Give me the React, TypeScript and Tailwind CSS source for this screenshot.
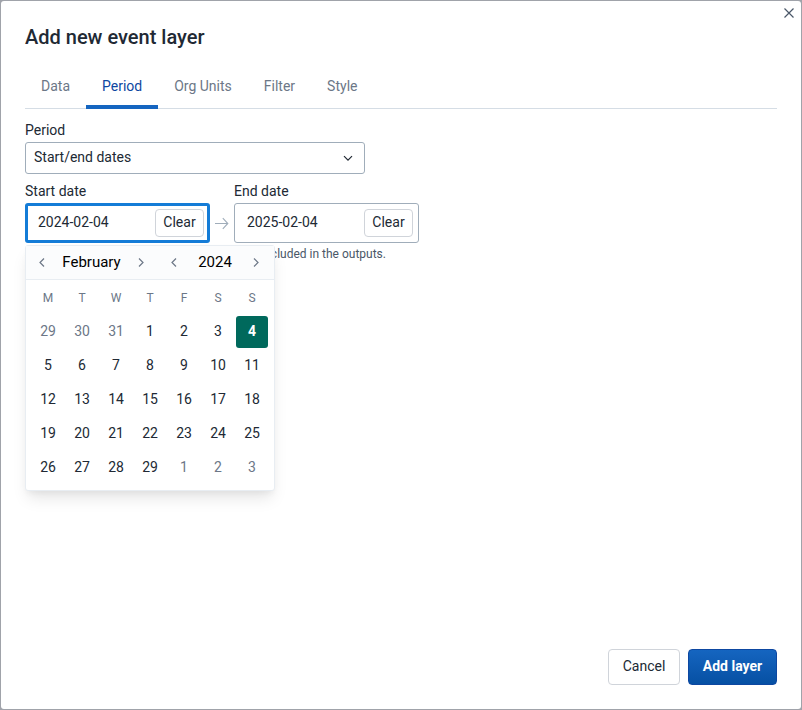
import React from "react";

const TABS = ["Data", "Period", "Org Units", "Filter", "Style"];
const WEEKDAYS = ["M", "T", "W", "T", "F", "S", "S"];
const WEEKS = [
  [29, 30, 31, 1, 2, 3, 4],
  [5, 6, 7, 8, 9, 10, 11],
  [12, 13, 14, 15, 16, 17, 18],
  [19, 20, 21, 22, 23, 24, 25],
  [26, 27, 28, 29, 1, 2, 3],
];

function isOutside(week: number, day: number) {
  return (week === 0 && day > 7) || (week === WEEKS.length - 1 && day < 7);
}

function Chevron({ dir }: { dir: "left" | "right" }) {
  return (
    <svg width="16" height="16" viewBox="0 0 16 16" fill="none" stroke="#6C7787" strokeWidth="1.2" aria-hidden="true">
      <path d={dir === "left" ? "M10 4.5 6 8.5l4 4" : "M6 4.5l4 4-4 4"} />
    </svg>
  );
}

function Stepper({ unit, value, width }: { unit: string; value: string; width: string }) {
  return (
    <div className="flex items-center">
      <button type="button" aria-label={`Previous ${unit}`} className="p-1">
        <Chevron dir="left" />
      </button>
      <span className={`${width} pb-px text-center text-[15px] leading-5 text-black`}>{value}</span>
      <button type="button" aria-label={`Next ${unit}`} className="p-1">
        <Chevron dir="right" />
      </button>
    </div>
  );
}

function Calendar() {
  return (
    <div className="absolute top-full left-0 z-10 mt-[2px] w-[250px] rounded-[3px] border border-[#E8EDF2] bg-white shadow-[0_10px_15px_-3px_rgba(0,0,0,0.1),0_4px_6px_-2px_rgba(0,0,0,0.05)]">
      <div className="flex h-[34px] items-center justify-between border-b border-[#E8EDF2] bg-[#FBFCFD] pr-[6px] pb-px pl-1">
        <Stepper unit="month" value="February" width="w-[75px]" />
        <Stepper unit="year" value="2024" width="w-[58px]" />
      </div>
      <div className="px-1 pb-1">
        <table className="border-separate border-spacing-[2px] text-center">
          <thead>
            <tr>
              {WEEKDAYS.map((d, i) => (
                <th key={i} scope="col" className="h-8 w-8 p-0 text-center text-xs font-normal text-[#6C7787]">
                  {d}
                </th>
              ))}
            </tr>
          </thead>
          <tbody>
            {WEEKS.map((week, w) => (
              <tr key={w}>
                {week.map((day) => {
                  const selected = w === 0 && day === 4;
                  const tone = selected
                    ? "bg-[#00695C] font-bold text-white"
                    : isOutside(w, day)
                      ? "text-[#6C7787]"
                      : "text-[#212934]";
                  return (
                    <td key={day} className="h-8 w-8 p-0">
                      <button type="button" className={`block h-8 w-8 rounded-[3px] pb-[2px] text-sm ${tone}`}>
                        {day}
                      </button>
                    </td>
                  );
                })}
              </tr>
            ))}
          </tbody>
        </table>
      </div>
    </div>
  );
}

function DateField({ id, label, value, open }: { id: string; label: string; value: string; open?: boolean }) {
  const frame = open ? "border-[3px] border-[#147CD7] pr-[3px] pl-[10px]" : "border border-[#A0ADBA] pr-[5px] pl-3";
  return (
    <div className="relative w-[185px]">
      <label htmlFor={id} className="block pb-[2px] text-sm">
        {label}
      </label>
      <div className={`flex h-10 items-center rounded-[3px] bg-white ${frame}`}>
        <input id={id} type="text" defaultValue={value} className="min-w-0 flex-1 bg-transparent pb-[2px] text-sm outline-none" />
        <button type="button" className="h-7 w-[49px] rounded-[4px] border border-[#D0D4DA] pb-[2px] text-sm">
          Clear
        </button>
      </div>
      {open && <Calendar />}
    </div>
  );
}

export default function App() {
  return (
    <div className="flex min-h-screen bg-[#A0A3AA] p-px font-['Roboto',sans-serif] text-[#212934]">
      <section role="dialog" aria-labelledby="dialog-title" className="relative flex flex-1 flex-col rounded-[3px] bg-white p-6">
        <button type="button" aria-label="Close" className="absolute top-1 right-1 p-px">
          <svg width="14" height="14" viewBox="0 0 14 14" fill="none" stroke="#4A5768" strokeWidth="1.2" aria-hidden="true">
            <path d="M2.5 2.5l9 9M11.5 2.5l-9 9" />
          </svg>
        </button>
        <h1 id="dialog-title" className="text-xl leading-6 font-medium">
          Add new event layer
        </h1>
        <div role="tablist" className="mt-4 flex border-b border-[#D5DDE5]">
          {TABS.map((tab) => {
            const active = tab === "Period";
            return (
              <button
                key={tab}
                type="button"
                role="tab"
                aria-selected={active}
                className={`-mb-px border-b-4 px-4 pt-[11px] pb-[9px] text-sm ${
                  active ? "border-[#1565C0] text-[#0D47A1]" : "border-transparent text-[#6C7787]"
                }`}
              >
                {tab}
              </button>
            );
          })}
        </div>
        <div className="flex-1 pt-[11px]">
          <label htmlFor="period-type" className="block pb-[2px] text-sm">
            Period
          </label>
          <div className="relative w-[340px]">
            <select
              id="period-type"
              className="block h-8 w-full appearance-none rounded-[3px] border border-[#A0ADBA] bg-white px-2 pb-[2px] text-sm"
            >
              <option>Start/end dates</option>
            </select>
            <svg className="pointer-events-none absolute top-2 right-2" width="16" height="16" viewBox="0 0 16 16" fill="none" stroke="#212934" strokeWidth="1.2" aria-hidden="true">
              <path d="M3 6.2l4 4 4-4" />
            </svg>
          </div>
          <div className="mt-[7px] flex items-end">
            <DateField id="start-date" label="Start date" value="2024-02-04" open />
            <div className="flex h-10 w-6 items-center justify-center">
              <svg width="16" height="16" viewBox="0 0 16 16" fill="none" stroke="#A0ADBA" strokeWidth="1.1" aria-hidden="true">
                <path d="M1 8.5h13M8.8 3.2l5 5.3-5 5.3" />
              </svg>
            </div>
            <DateField id="end-date" label="End date" value="2025-02-04" />
          </div>
          <p className="mt-[3px] text-xs text-[#4A5768]">Start and end dates are inclusive and will be included in the outputs.</p>
        </div>
        <footer className="flex justify-end gap-2">
          <button type="button" className="h-9 w-[72px] rounded-[4px] border border-[#D0D4DA] pb-[2px] text-sm">
            Cancel
          </button>
          <button
            type="button"
            className="h-9 w-[89px] rounded-[4px] border border-[#0D47A1] bg-linear-to-b from-[#1565C0] to-[#0650A3] pb-[2px] text-sm font-bold text-white"
          >
            Add layer
          </button>
        </footer>
      </section>
    </div>
  );
}
